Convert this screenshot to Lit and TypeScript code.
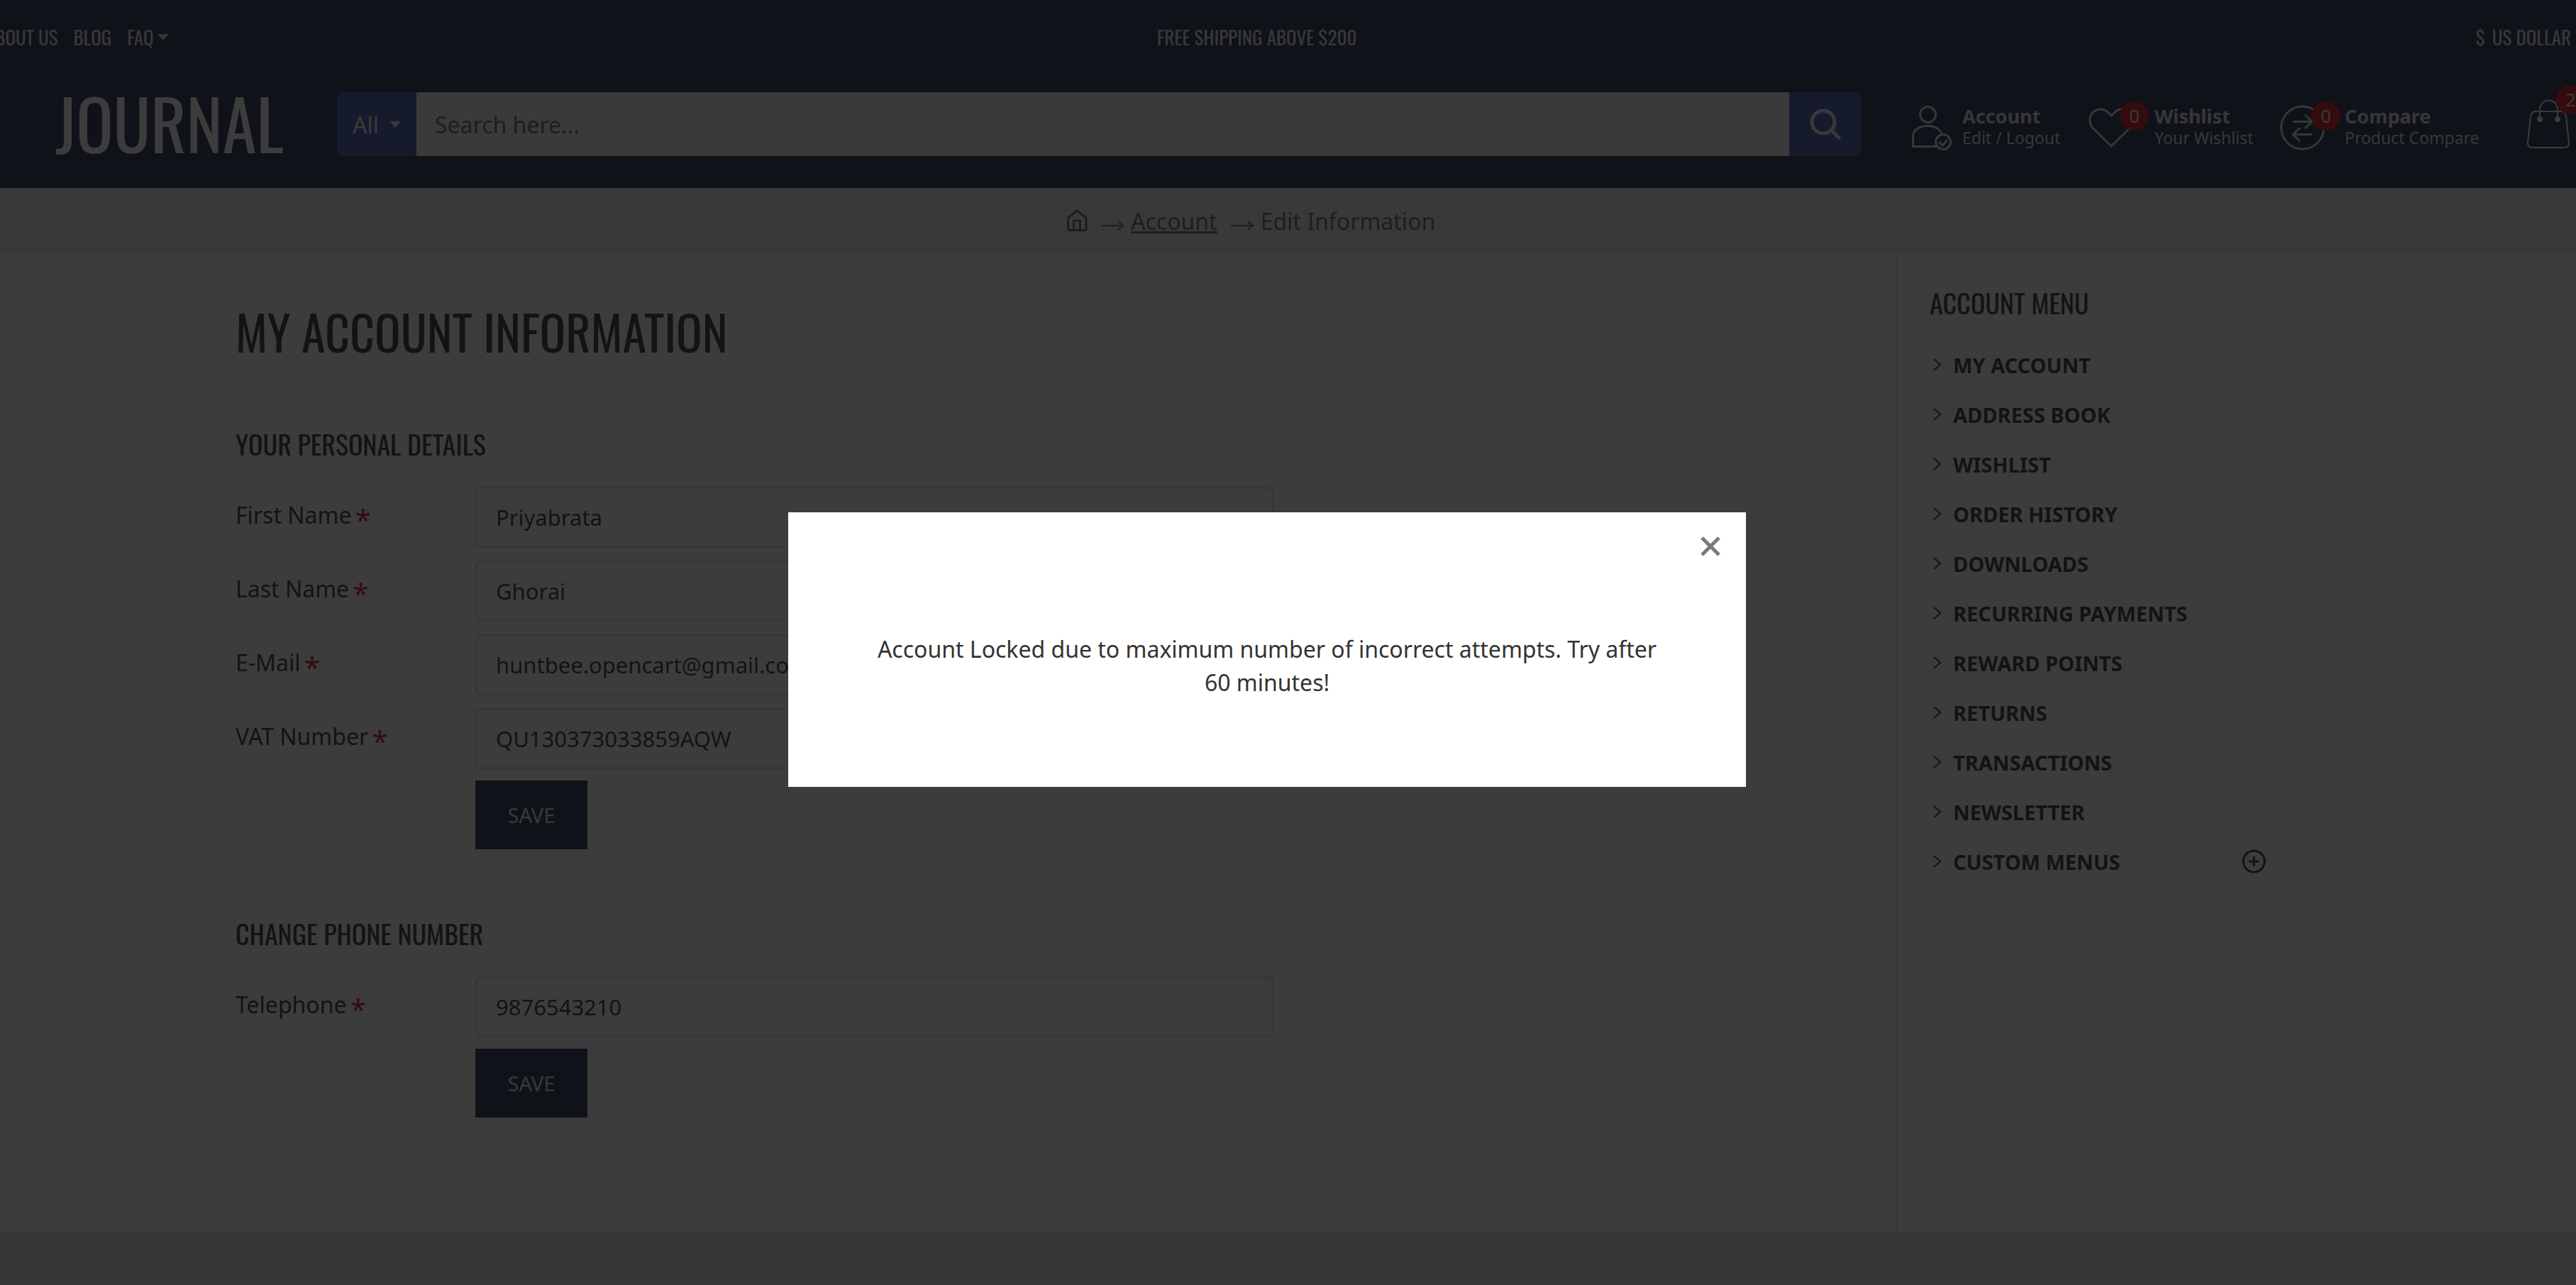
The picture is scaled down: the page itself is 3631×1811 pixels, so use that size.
import { LitElement, html, css, svg } from "lit";
import { customElement, state } from "lit/decorators.js";

interface Field {
  id: string;
  label: string;
  value: string;
  type: string;
}

const personal: Field[] = [
  { id: "firstname", label: "First Name", value: "Priyabrata", type: "text" },
  { id: "lastname", label: "Last Name", value: "Ghorai", type: "text" },
  { id: "email", label: "E-Mail", value: "huntbee.opencart@gmail.com", type: "email" },
  { id: "vat", label: "VAT Number", value: "QU130373033859AQW", type: "text" },
];

const phone: Field[] = [
  { id: "telephone", label: "Telephone", value: "9876543210", type: "tel" },
];

const menu = [
  "My Account",
  "Address Book",
  "Wishlist",
  "Order History",
  "Downloads",
  "Recurring Payments",
  "Reward Points",
  "Returns",
  "Transactions",
  "Newsletter",
  "Custom Menus",
];

const arrow = svg`<svg class="arrow" viewBox="0 0 32 16" aria-hidden="true"><path d="M0 8H30M24 2L31 8L24 14" /></svg>`;

@customElement("app-root")
export class AppRoot extends LitElement {
  @state() private open = true;

  static styles = css`
    :host {
      display: flex;
      flex-direction: column;
      min-height: 100vh;
      overflow: hidden;
      background: #fff;
      color: #333;
      font: 32px/47px "Noto Sans", sans-serif;
    }
    * {
      box-sizing: border-box;
    }
    a {
      color: inherit;
      text-decoration: none;
    }
    button,
    input {
      font: inherit;
      color: inherit;
      border: 0;
      margin: 0;
      padding: 0;
      border-radius: 0;
      outline: 0;
    }
    svg {
      display: block;
      flex: none;
      fill: none;
      stroke: currentColor;
      stroke-width: 3;
    }
    h1,
    h2,
    h3,
    p,
    ul {
      margin: 0;
      padding: 0;
      font-weight: 400;
      list-style: none;
    }
    h1,
    h2,
    h3,
    .topbar,
    .logo {
      font-family: "Oswald", "Liberation Sans Narrow", "Liberation Sans", sans-serif;
      text-transform: uppercase;
    }
    .header {
      background: #1f2d4d;
      color: #e6e6e6;
    }
    .topbar {
      display: grid;
      grid-template-columns: 45% 1fr auto;
      align-items: center;
      height: 104px;
      padding-right: 7px;
      font-size: 27px;
      white-space: nowrap;
    }
    .links {
      display: flex;
      gap: 22px;
      margin-left: -20px;
    }
    .faq {
      display: flex;
      align-items: center;
      gap: 5px;
    }
    .caret {
      width: 16px;
      height: 9px;
      fill: currentColor;
      stroke: none;
    }
    .currency {
      display: flex;
      gap: 10px;
    }
    .bar {
      display: flex;
      align-items: center;
      height: 161px;
      padding: 0 0 19px 78px;
    }
    .logo {
      width: 397px;
      padding-bottom: 6px;
      color: #fff;
      font-size: 97px;
      line-height: 90px;
    }
    .search {
      display: flex;
      flex: 1;
      height: 90px;
      margin-right: 71px;
      border-radius: 12px;
      overflow: hidden;
      background: #f2f2f2;
    }
    .category {
      display: flex;
      align-items: center;
      justify-content: center;
      gap: 15px;
      width: 112px;
      background: #4457b5;
      color: #eee;
    }
    .query {
      flex: 1;
      min-width: 0;
      padding: 0 26px;
      background: transparent;
      color: #333;
    }
    .query::placeholder {
      color: #69696f;
      opacity: 1;
    }
    .go {
      display: grid;
      place-items: center;
      width: 101px;
      background: #4457b5;
      color: #eee;
    }
    .go svg,
    .close svg {
      stroke-width: 5;
    }
    .tool {
      display: flex;
      align-items: center;
      height: 90px;
      padding-top: 10px;
      white-space: nowrap;
    }
    .tool-account {
      width: 250px;
      gap: 12px;
    }
    .tool-wishlist {
      width: 270px;
      gap: 28px;
    }
    .tool-compare {
      width: 348px;
      gap: 27px;
    }
    .tool-cart {
      width: 69px;
      padding-top: 0;
      color: #fff;
    }
    .pic {
      position: relative;
      display: block;
    }
    .badge {
      position: absolute;
      top: -5px;
      left: 44px;
      width: 41px;
      height: 41px;
      border-radius: 50%;
      background: #dd0e1c;
      color: #eee;
      font-size: 26px;
      line-height: 41px;
      text-align: center;
    }
    .tool-cart .badge {
      top: -20px;
      left: 41px;
    }
    .tool-cart svg {
      stroke-width: 2;
    }
    .words {
      display: block;
      padding-bottom: 5px;
      font-size: 23px;
      line-height: 28px;
    }
    .words b,
    .words span {
      display: block;
    }
    .words b {
      font-size: 27px;
      line-height: 32px;
    }
    .crumbs {
      display: flex;
      align-items: center;
      height: 92px;
      padding-left: 1503px;
      background: #eee;
      color: #69696f;
      white-space: nowrap;
    }
    .crumbs .arrow {
      width: 32px;
      height: 16px;
      margin: 13px 10px 0 19px;
      stroke-width: 2;
    }
    .crumbs a {
      text-decoration: underline;
      text-decoration-thickness: 3px;
    }
    .content {
      display: grid;
      grid-template-columns: minmax(0, 1fr) 959px;
    }
    .main {
      padding: 54px 332px 158px;
    }
    h1 {
      font-size: 68px;
      line-height: 112px;
      margin-bottom: 72px;
    }
    h2,
    h3 {
      font-size: 38px;
      line-height: 60px;
    }
    .fields {
      display: grid;
      grid-template-columns: 338px minmax(0, 1125px);
      row-gap: 18px;
      margin: 31px 0 16px;
    }
    .label {
      padding-top: 16px;
    }
    .star {
      margin-left: -3px;
      color: #dd0e1c;
      font-size: 40px;
      line-height: 0;
      vertical-align: -9px;
    }
    .field {
      height: 86px;
      padding: 0 26px;
      border: 3px solid #e2e2e2;
      border-radius: 6px;
      background: transparent;
      font-size: 31px;
    }
    .save {
      display: block;
      width: 158px;
      height: 97px;
      margin: 0 0 88px 338px;
      background: #1f2d4d;
      color: #eee;
      font-size: 29px;
      text-transform: uppercase;
    }
    .phone .save {
      margin-bottom: 2px;
    }
    .side {
      border-left: 2px solid #e2e2e2;
      padding: 39px 46px;
    }
    .menu {
      width: 474px;
      margin-top: 23px;
      font-size: 29px;
      font-weight: 700;
      text-transform: uppercase;
    }
    .entry {
      display: flex;
      align-items: center;
      justify-content: space-between;
      height: 70px;
      padding-left: 5px;
    }
    .entry a {
      display: flex;
      align-items: center;
      gap: 16px;
    }
    .entry a svg {
      stroke-width: 2;
    }
    .plus {
      background: none;
    }
    .footer {
      flex: 1;
      background: #dce2e6;
    }
    .overlay {
      position: fixed;
      inset: 0;
      display: grid;
      place-items: center;
      padding: 20px 59px 0 0;
      background: rgba(11, 11, 11, 0.8);
    }
    .popup {
      position: relative;
      display: grid;
      place-items: center;
      width: 1350px;
      max-width: 100%;
      height: 387px;
      padding: 91px 120px 46px;
      background: #fff;
      text-align: center;
    }
    .close {
      position: absolute;
      top: 33px;
      right: 35px;
      background: none;
      color: #7a7a7a;
    }
  `;

  private fields(list: Field[]) {
    return html`<div class="fields">
      ${list.map(
        (f) => html`<label class="label" for=${f.id}>${f.label} <span class="star">*</span></label>
          <input class="field" id=${f.id} type=${f.type} .value=${f.value} />`
      )}
    </div>`;
  }

  render() {
    return html`
      <header class="header">
        <div class="topbar">
          <nav class="links">
            <a href="#">About Us</a>
            <a href="#">Blog</a>
            <a class="faq" href="#">FAQ<svg class="caret" viewBox="0 0 16 9"><path d="M0 0H16L8 9Z" /></svg></a>
          </nav>
          <span>Free shipping above $200</span>
          <a class="currency" href="#"><span>$</span><span>US Dollar</span></a>
        </div>
        <div class="bar">
          <a class="logo" href="#">Journal</a>
          <form class="search" @submit=${(e: Event) => e.preventDefault()}>
            <button class="category" type="button">
              All<svg class="caret" viewBox="0 0 16 9"><path d="M0 0H16L8 9Z" /></svg>
            </button>
            <input class="query" type="search" placeholder="Search here..." aria-label="Search" />
            <button class="go" aria-label="Search">
              <svg width="44" height="48" viewBox="0 0 44 48" stroke-linecap="round">
                <circle cx="19" cy="21" r="16" />
                <path d="M30 32L41 43" />
              </svg>
            </button>
          </form>
          <a class="tool tool-account" href="#">
            <svg width="60" height="64" viewBox="0 0 60 64">
              <circle cx="23.5" cy="13.5" r="11" />
              <path d="M35 58.5H2.5V43.5C2.5 36 10 29.500 23.500 29.500C33 29.500 41 34 43.500 41.500" />
              <circle cx="45" cy="52" r="10.500" />
              <path d="M39 52L44 57L51 49" />
            </svg>
            <span class="words"><b>Account</b><span>Edit / Logout</span></span>
          </a>
          <a class="tool tool-wishlist" href="#">
            <span class="pic">
              <svg width="65" height="64" viewBox="0 0 65 64">
                <path d="M32 58L6.500 33C0 26 0.500 15 7 9.500C14 4 22 5.500 27 10L32 15L37 10C42 5.500 50 4 57 9.500C63.500 15 64 26 57.500 33Z" />
              </svg>
              <span class="badge">0</span>
            </span>
            <span class="words"><b>Wishlist</b><span>Your Wishlist</span></span>
          </a>
          <a class="tool tool-compare" href="#">
            <span class="pic">
              <svg width="64" height="64" viewBox="0 0 64 64">
                <circle cx="31.500" cy="32" r="30" />
                <path d="M18 23.500H45M35 14L45 23.500L35 33M45 41.500H18M28 32L18 41.500L28 51" />
              </svg>
              <span class="badge">0</span>
            </span>
            <span class="words"><b>Compare</b><span>Product Compare</span></span>
          </a>
          <a class="tool tool-cart" href="#" aria-label="Cart">
            <span class="pic">
              <svg width="60" height="70" viewBox="0 0 60 70">
                <path d="M12 17H48Q54 17 55 24L59 61Q59 68 53 68H7Q1 68 1 61L5 24Q6 17 12 17Z" />
                <path d="M18 27V15C18 -3 43 -3 43 15V27" />
                <circle cx="18" cy="28" r="3" fill="currentColor" />
                <circle cx="43" cy="28" r="3" fill="currentColor" />
              </svg>
              <span class="badge">2</span>
            </span>
          </a>
        </div>
      </header>
      <nav class="crumbs">
        <a href="#" aria-label="Home">
          <svg width="30" height="32" viewBox="0 0 30 32">
            <path d="M2.500 12L15 2L28 12V27Q28 29.500 25 29.500H5Q2.500 29.500 2.500 27ZM10.500 29V16H19.500V29" />
          </svg>
        </a>
        ${arrow}<a href="#">Account</a>${arrow}<span>Edit Information</span>
      </nav>
      <div class="content">
        <main class="main">
          <h1>My Account Information</h1>
          <form @submit=${(e: Event) => e.preventDefault()}>
            <h2>Your Personal Details</h2>
            ${this.fields(personal)}
            <button class="save">Save</button>
          </form>
          <form class="phone" @submit=${(e: Event) => e.preventDefault()}>
            <h2>Change Phone Number</h2>
            ${this.fields(phone)}
            <button class="save">Save</button>
          </form>
        </main>
        <aside class="side">
          <h3>Account Menu</h3>
          <ul class="menu">
            ${menu.map(
              (m, i) => html`<li class="entry">
                <a href="#"
                  ><svg width="12" height="18" viewBox="0 0 12 18"><path d="M1 1L10 9L1 17" /></svg>${m}</a
                >
                ${i === menu.length - 1
                  ? html`<button class="plus" aria-label="Expand">
                      <svg width="34" height="34" viewBox="0 0 34 34">
                        <circle cx="17" cy="17" r="15" />
                        <path d="M10 17H24M17 10V24" />
                      </svg>
                    </button>`
                  : ""}
              </li>`
            )}
          </ul>
        </aside>
      </div>
      <footer class="footer"></footer>
      ${this.open
        ? html`<div class="overlay">
            <div class="popup" role="dialog" aria-modal="true">
              <button class="close" aria-label="Close" @click=${() => (this.open = false)}>
                <svg width="30" height="30" viewBox="0 0 30 30"><path d="M3 3L27 27M27 3L3 27" /></svg>
              </button>
              <p>Account Locked due to maximum number of incorrect attempts. Try after 60 minutes!</p>
            </div>
          </div>`
        : ""}
    `;
  }
}
